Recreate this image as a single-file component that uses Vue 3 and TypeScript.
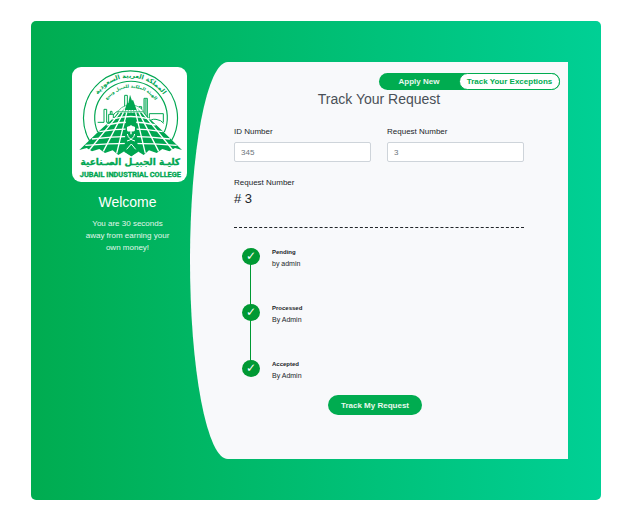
<script setup lang="ts">
import { ref } from 'vue'

interface Step {
  title: string
  by: string
}

const idNumber = ref('345')
const requestNumber = ref('3')
const activeTab = ref('track')

const tabs = [
  { key: 'apply', label: 'Apply New' },
  { key: 'track', label: 'Track Your Exceptions' },
]

const steps: Step[] = [
  { title: 'Pending', by: 'by admin' },
  { title: 'Processed', by: 'By Admin' },
  { title: 'Accepted', by: 'By Admin' },
]
</script>

<template>
  <main class="register">
    <aside class="side">
      <svg class="logo" viewBox="24 21 345 345" role="img" aria-label="Jubail Industrial College">
        <defs>
          <path id="arc-outer" d="M80 172.500A119.500 119.500 0 0 1 319 172.500" />
          <path id="arc-inner" d="M112 172A89 89 0 0 1 290 172" />
        </defs>
        <g fill="none" stroke="#00a651" stroke-width="3.500">
          <path d="M78 245A141 141 0 1 1 321 245" />
          <path d="M101 216A109 109 0 1 1 301 216" />
        </g>
        <g class="arabic" text-anchor="middle">
          <text font-size="19"><textPath href="#arc-outer" startOffset="50%">المملكة العربية السعودية</textPath></text>
          <text font-size="13"><textPath href="#arc-inner" startOffset="50%">الهيئة الملكية للجبيل وينبع</textPath></text>
        </g>
        <!-- skyline -->
        <g fill="#fff" stroke="#00a651" stroke-width="3">
          <path d="M101 187H120V148H128V187H134V163H154V187M139 163V154H144V163" />
          <path d="M148 187V165Q160 147 175 157V187" />
          <path d="M182 150V106H190V150" />
          <path d="M225 187V140H233V187M240 187V115H250V187M256 187V161H298V187" />
          <path d="M256 187Q260 176 276 178Q292 180 299 190" />
        </g>
        <path d="M227 142H232V185H227ZM242 117H248V185H242ZM234 160H240V185H234Z" fill="#00a651" opacity=".6" />
        <path d="M159 164Q166 136 200 135Q235 136 242 164Z" fill="#fff" stroke="#00a651" stroke-width="2" />
        <path d="M182 150L190 127L193 130L198 104L204 122L207 119L218 150Z" fill="#00a651" />
        <g fill="none" stroke="#00a651" stroke-width="2">
          <path d="M163 155H238" />
          <path d="M171 162L180 146M181 162L187 146M191 162L194 146M201 162V146M211 162L208 146M221 162L215 146M231 162L222 146" stroke-dasharray="6 2" />
        </g>
        <!-- tiled plaza -->
        <path d="M162 158H240L257 176L299 216L354 270L333 264L316 274L295 267L278 279L255 271L239 285L221 274L202 289L181 274L163 285L146 271L123 279L106 267L84 274L68 264L46 270L102 216L146 176Z" fill="#00a651" />
        <g fill="none" stroke="#fff" stroke-width="4">
          <path d="M168 158L76 270M178 158L118 274M188 158L158 280M215 158L244 280M225 158L284 274M235 158L326 270" />
          <path d="M145 177Q200 162 257 177M128 195Q200 177 275 195M106 215Q200 198 296 215M84 237Q200 221 318 237M64 256Q200 244 338 256" />
        </g>
        <path d="M186 178Q201 172 216 178L222 276L202 289L181 276Z" fill="#00a651" />
        <path d="M199 223V214Q188 217 189 207Q187 198 196 199Q201 193 206 199Q215 198 213 207Q214 217 203 214V223Z" fill="#fff" />
        <path d="M190 222Q193 238 213 243M212 222Q209 238 189 243" fill="none" stroke="#fff" stroke-width="3" />
        <path d="M188 268L202 252L215 268" fill="none" stroke="#fff" stroke-width="3" />
        <text class="arabic name" x="199" y="314" font-size="27" text-anchor="middle">كليـة الجبيـل الصـناعية</text>
        <text class="latin" x="199" y="352" font-size="22" text-anchor="middle">JUBAIL INDUSTRIAL COLLEGE</text>
      </svg>
      <h1 class="welcome">Welcome</h1>
      <p class="tagline">You are 30 seconds away from earning your own money!</p>
    </aside>

    <section class="panel">
      <nav class="tabs" aria-label="Requests">
        <button
          v-for="tab in tabs"
          :key="tab.key"
          type="button"
          class="tab"
          :class="{ active: activeTab === tab.key }"
          @click="activeTab = tab.key"
        >{{ tab.label }}</button>
      </nav>
      <h2 class="heading">Track Your Request</h2>
      <form class="form" @submit.prevent>
        <div class="fields">
          <div class="field">
            <label for="id-number">ID Number</label>
            <input id="id-number" v-model="idNumber" type="text">
          </div>
          <div class="field">
            <label for="request-number">Request Number</label>
            <input id="request-number" v-model="requestNumber" type="text">
          </div>
        </div>
        <div class="result">
          <span class="result-label">Request Number</span>
          <span class="result-value"># {{ requestNumber }}</span>
        </div>
        <hr class="rule">
        <ol class="timeline">
          <li v-for="step in steps" :key="step.title" class="step">
            <span class="dot">✓</span>
            <div class="step-text">
              <strong>{{ step.title }}</strong>
              <span>{{ step.by }}</span>
            </div>
          </li>
        </ol>
        <div class="actions">
          <button type="submit" class="submit">Track My Request</button>
        </div>
      </form>
    </section>
  </main>
</template>

<style>
body {
  background: #fff;
}
</style>

<style scoped>
* {
  box-sizing: border-box;
}

.register {
  display: flex;
  margin: 21px 35px 24px 31px;
  padding: 41px 33px;
  border-radius: 5px;
  background: linear-gradient(to right, #00ac50, #00d095);
  color: #212529;
  font-family: "Liberation Sans", Arial, sans-serif;
  font-size: 8px;
  line-height: 12px;
}

.side {
  flex: 0 0 126px;
  padding: 5px 3px 0 8px;
  color: #fff;
  text-align: center;
}

.logo {
  display: block;
  width: 115px;
  height: 115px;
  border-radius: 9px;
  background: #fff;
}

.arabic {
  fill: #00a651;
  font-family: "DejaVu Sans", sans-serif;
  font-weight: 700;
}

.name {
  direction: rtl;
  stroke: #00a651;
  stroke-width: 1;
}

.latin {
  fill: #00a651;
  stroke: #00a651;
  stroke-width: 1;
  font-family: Roboto, "Liberation Sans", Arial, sans-serif;
  font-weight: 700;
}

.welcome {
  margin: 12px 4px 8px 0;
  font-size: 14px;
  font-weight: 400;
  line-height: 16px;
}

.tagline {
  margin: 0 4px 0 0;
  padding: 0 12px;
  color: #e0f6eb;
}

.panel {
  flex: 1;
  min-width: 0;
  padding: 11px 8px 44px;
  border-radius: 10% 0 0 10% / 50% 0 0 50%;
  background: #f8f9fb;
}

.tabs {
  display: flex;
  width: 181px;
  height: 17px;
  margin-left: auto;
  border-radius: 9px;
  background: #00ac50;
}

.tab {
  flex: 1;
  padding: 0;
  border: 1px solid transparent;
  border-radius: 9px;
  background: transparent;
  color: #e8f8ee;
  font: 700 8px/14px "Liberation Sans", Arial, sans-serif;
  white-space: nowrap;
}

.tab.active {
  flex: 0 0 101px;
  border-color: #00ac50;
  background: #fff;
  color: #00ac50;
}

.heading {
  margin: 1px 0 0;
  color: #495057;
  font-size: 14px;
  font-weight: 400;
  line-height: 16px;
  text-align: center;
}

.form {
  padding: 19px 36px 0;
}

.fields {
  display: grid;
  grid-template-columns: 1fr 1fr;
  gap: 16px;
}

.field {
  display: flex;
  flex-direction: column;
  gap: 4px;
}

.field input {
  width: 100%;
  height: 20px;
  padding: 0 6px;
  border: 1px solid #ced4da;
  border-radius: 2px;
  background: #fff;
  color: #6c757d;
  font: 8px "Liberation Sans", Arial, sans-serif;
}

.result {
  display: flex;
  flex-direction: column;
  gap: 2px;
  margin-top: 15px;
}

.result-value {
  font-size: 13px;
  line-height: 16px;
}

.rule {
  margin: 20px 0 0;
  border: 0;
  border-top: 1px dashed #212529;
}

.timeline {
  margin: 20px 0 0;
  padding: 0 0 0 8px;
  list-style: none;
}

.step {
  position: relative;
  display: flex;
  gap: 12px;
  height: 56px;
}

.step:last-child {
  height: 24px;
}

.step:not(:last-child)::before {
  content: "";
  position: absolute;
  top: 9px;
  left: 8px;
  width: 1px;
  height: 56px;
  background: #009933;
}

.dot {
  position: relative;
  flex: none;
  width: 18px;
  height: 17px;
  border-radius: 50%;
  background: #009933;
  color: #fff;
  font-family: "DejaVu Sans", sans-serif;
  font-size: 12px;
  line-height: 17px;
  text-align: center;
}

.step-text {
  display: flex;
  flex-direction: column;
  margin-top: -2px;
  font-size: 7px;
}

.step-text strong {
  font-size: 6px;
}

.actions {
  display: flex;
  justify-content: center;
  margin-top: 11px;
  padding-right: 8px;
}

.submit {
  width: 94px;
  height: 20px;
  padding: 0;
  border: 0;
  border-radius: 10px;
  background: #00ac50;
  color: #e8f8ee;
  font: 700 8px "Liberation Sans", Arial, sans-serif;
}
</style>
